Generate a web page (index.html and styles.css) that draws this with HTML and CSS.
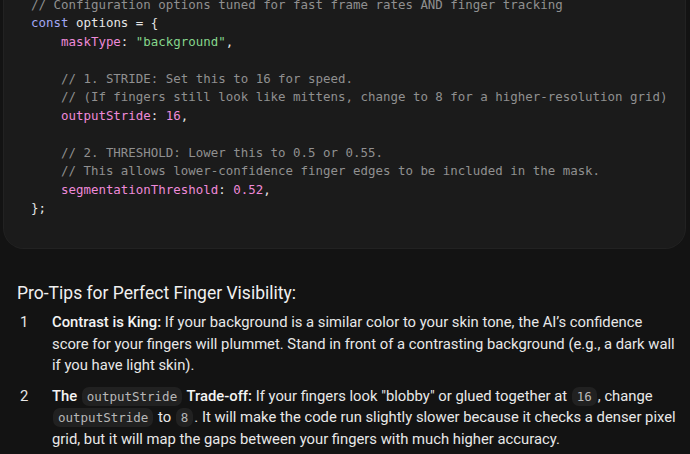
FILE: index.html
```html
<!DOCTYPE html>
<html>
<head>
<meta charset="utf-8">
<link rel="stylesheet" href="styles.css">
</head>
<body>
<div class="code-block">
<pre class="code"><span class="c">// Configuration options tuned for fast frame rates AND finger tracking</span>
<span class="k">const</span> options = {
    <span class="p">maskType</span>: <span class="s">"background"</span>,

    <span class="c">// 1. STRIDE: Set this to 16 for speed.</span>
    <span class="c">// (If fingers still look like mittens, change to 8 for a higher-resolution grid)</span>
    <span class="p">outputStride</span>: <span class="n">16</span>,

    <span class="c">// 2. THRESHOLD: Lower this to 0.5 or 0.55.</span>
    <span class="c">// This allows lower-confidence finger edges to be included in the mask.</span>
    <span class="p">segmentationThreshold</span>: <span class="n">0.52</span>,
};</pre>
</div>
<h3 class="heading">Pro-Tips for Perfect Finger Visibility:</h3>
<ol class="tips">
  <li class="tip"><span class="num">1</span><p class="body"><strong>Contrast is King:</strong> If your background is a similar color to your skin tone, the AI’s confidence score for your fingers will plummet. Stand in front of a contrasting background (e.g., a dark wall if you have light skin).</p></li>
  <li class="tip"><span class="num">2</span><p class="body"><strong>The <code>outputStride</code> Trade-off:</strong> If your fingers look "blobby" or glued together at <code>16</code>, change <code>outputStride</code> to <code>8</code>. It will make the code run slightly slower because it checks a denser pixel grid, but it will map the gaps between your fingers with much higher accuracy.</p></li>
</ol>
</body>
</html>
```
FILE: styles.css
```css
html, body {
  margin: 0;
  padding: 0;
  background: #131313;
}
body {
  color: #e8e8e8;
  font-family: "Roboto", "Inter", sans-serif;
  overflow: hidden;
}
.code-block {
  margin: -4px 4px 0 3px;
  background: #1b1b1b;
  border: 1px solid #222;
  border-top: none;
  border-radius: 0 0 21px 21px;
  padding: 0 0 31px 27px;
}
.code {
  margin: 0;
  font-family: "DejaVu Sans Mono", monospace;
  font-size: 12.45px;
  line-height: 18.45px;
  color: #e6e6e6;
  white-space: pre;
}
.c { color: #909090; }
.k { color: #a3a8f5; }
.p { color: #ee8ad9; }
.s { color: #86d68c; }
.n { color: #ee8ad9; }
.heading {
  margin: 32px 0 0 17px;
  font-size: 17.5px;
  font-weight: 400;
  line-height: 24px;
  color: #f0f0f0;
}
.tips {
  list-style: none;
  margin: 7px 0 0 0;
  padding: 0;
}
.tip {
  display: flex;
  margin-bottom: 9px;
}
.num {
  width: 52px;
  flex: none;
  padding-left: 20px;
  box-sizing: border-box;
  font-size: 14.8px;
  line-height: 21.5px;
}
.body {
  margin: 0;
  padding-right: 12px;
  font-size: 14.8px;
  line-height: 21.5px;
  color: #e8e8e8;
}
strong { font-weight: 500; color: #f4f4f4; }
code {
  font-family: "DejaVu Sans Mono", monospace;
  font-size: 12.5px;
  font-weight: 400;
  color: #b8b8b8;
  background: #212121;
  border-radius: 7px;
  padding: 2px 5px;
  margin: 0 1px;
}
```
